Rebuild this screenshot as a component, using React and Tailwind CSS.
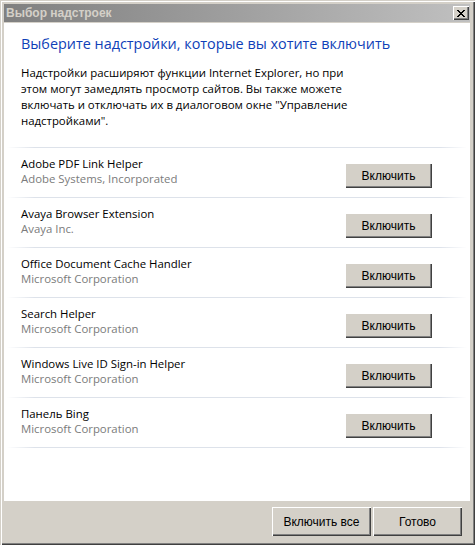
import React from 'react';

const addons = [
  { name: 'Adobe PDF Link Helper', company: 'Adobe Systems, Incorporated' },
  { name: 'Avaya Browser Extension', company: 'Avaya Inc.' },
  { name: 'Office Document Cache Handler', company: 'Microsoft Corporation' },
  { name: 'Search Helper', company: 'Microsoft Corporation' },
  { name: 'Windows Live ID Sign-in Helper', company: 'Microsoft Corporation' },
  { name: 'Панель Bing', company: 'Microsoft Corporation' },
];

const classicBtn =
  'bg-[#d4d0c8] text-black shadow-[inset_1px_1px_0_#ffffff,inset_-1px_-1px_0_#404040,inset_-2px_-2px_0_#808080] font-["Liberation_Sans",Arial,sans-serif] text-[12px] leading-none flex items-center justify-center';

function Separator() {
  return (
    <div className="h-px bg-[linear-gradient(to_right,rgba(221,226,234,0),#dde2ea_6%,#dde2ea_94%,rgba(221,226,234,0))]" />
  );
}

export default function App() {
  return (
    <div className="w-[475px] h-[545px] bg-[#d4d0c8] flex flex-col pt-[4px] pl-[4px] pr-[5px] pb-[4px] shadow-[inset_1px_1px_0_#d4d0c8,inset_2px_2px_0_#ffffff,inset_-1px_-1px_0_#404040,inset_-2px_-2px_0_#808080]">
      {/* Title bar */}
      <div className="h-[18px] bg-gradient-to-r from-[#808080] to-[#c0c0c0] flex items-center justify-between pl-[2px] pr-[1px]">
        <span className='font-["Liberation_Sans",Arial,sans-serif] font-bold text-[12px] text-[#d4d0c8] leading-none'>
          Выбор надстроек
        </span>
        <button className={`${classicBtn} w-[16px] h-[14px]`}>
          <svg width="8" height="7" viewBox="0 0 8 7" shapeRendering="crispEdges">
            <path d="M0 0h2v1H0zM6 0h2v1H6zM1 1h2v1H1zM5 1h2v1H5zM2 2h4v1H2zM3 3h2v1H3zM2 4h4v1H2zM1 5h2v1H1zM5 5h2v1H5zM0 6h2v1H0zM6 6h2v1H6z" fill="#000" />
          </svg>
        </button>
      </div>

      {/* Content */}
      <div className='mt-px flex-1 bg-white flex flex-col font-["Open_Sans","Noto_Sans",sans-serif]'>
        <h1 className="pl-[17px] pt-[11px] text-[14.4px] leading-[20px] text-[#0f3fb8] font-normal whitespace-nowrap">
          Выберите надстройки, которые вы хотите включить
        </h1>
        <p className="pl-[17px] mt-[11px] text-[11.4px] leading-[16px] text-black whitespace-nowrap">
          Надстройки расширяют функции Internet Explorer, но при
          <br />
          этом могут замедлять просмотр сайтов. Вы также можете
          <br />
          включать и отключать их в диалоговом окне "Управление
          <br />
          надстройками".
        </p>

        <div className="mx-[3px] mt-[18px]">
          {addons.map((a) => (
            <div key={a.name}>
              <Separator />
              <div className="h-[49px] flex items-start justify-between pl-[14px] pr-[35px]">
                <div className="pt-[8px] text-[11.4px] leading-[15px] whitespace-nowrap">
                  <div className="text-black">{a.name}</div>
                  <div className="text-[#7b7b7b]">{a.company}</div>
                </div>
                <button className={`${classicBtn} mt-[15px] w-[87px] h-[25px]`}>Включить</button>
              </div>
            </div>
          ))}
          <Separator />
        </div>
      </div>

      {/* Button bar */}
      <div className="h-[40px] flex justify-end items-start pt-[6px] pr-[8px] gap-[2px]">
        <button className={`${classicBtn} w-[99px] h-[29px]`}>Включить все</button>
        <button className={`${classicBtn} w-[89px] h-[29px]`}>Готово</button>
      </div>
    </div>
  );
}
